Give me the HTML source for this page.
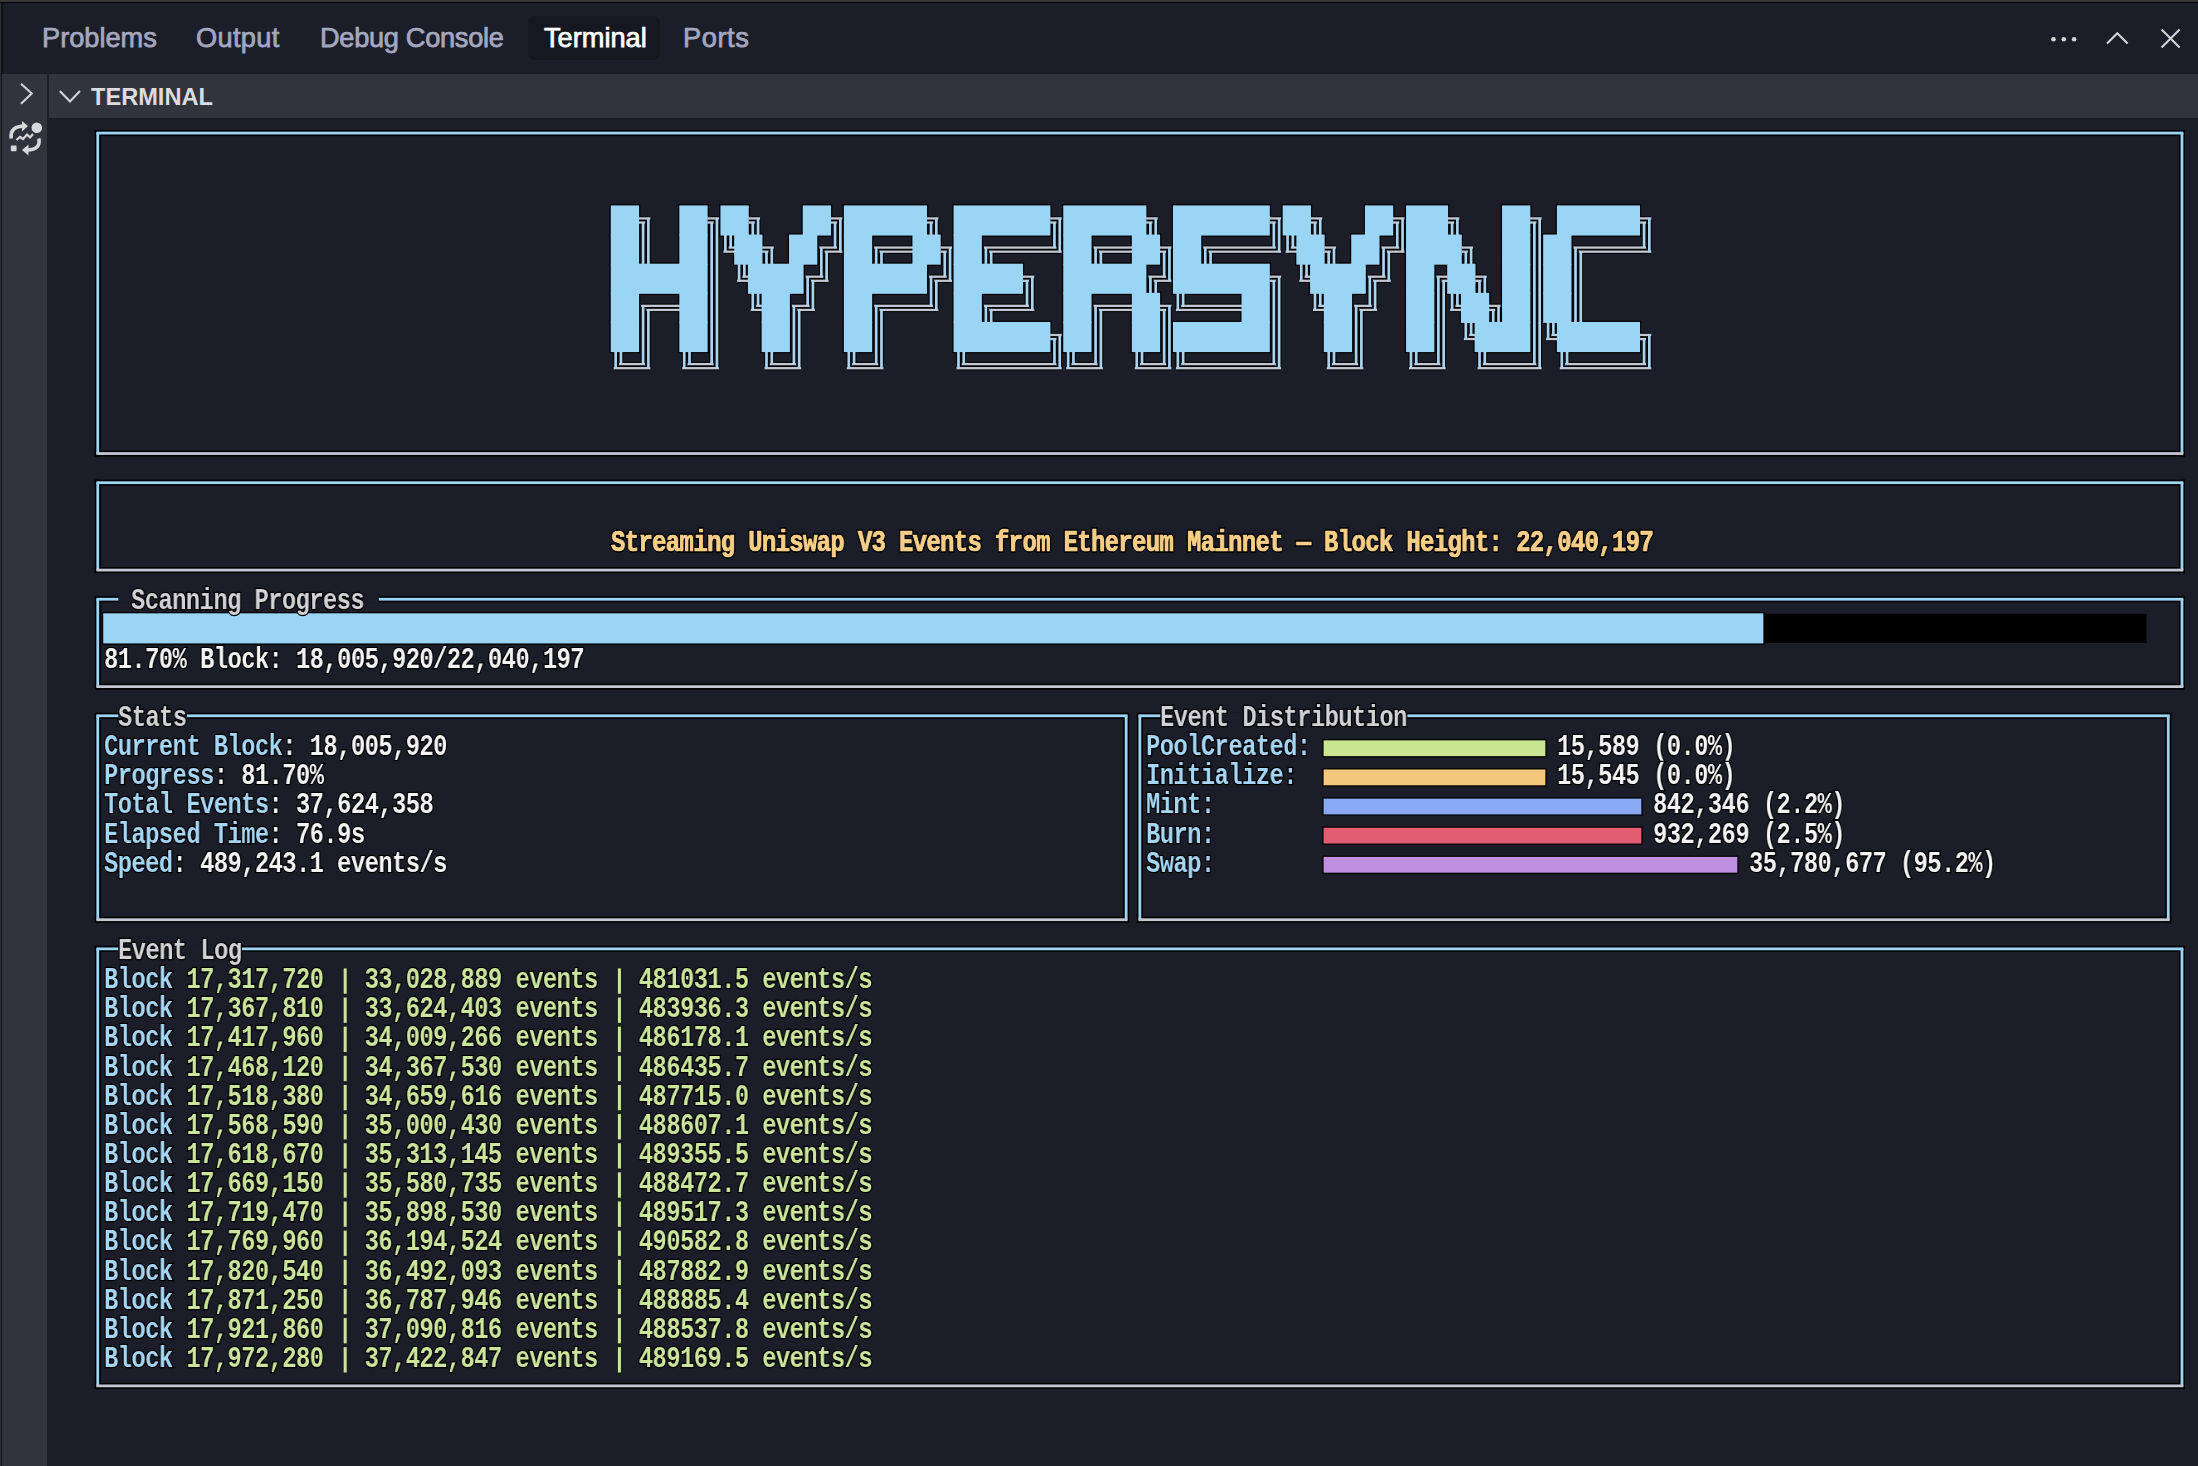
<!DOCTYPE html>
<html><head><meta charset="utf-8"><title>HyperSync Terminal</title>
<style>
html,body{margin:0;padding:0;width:2198px;height:1466px;overflow:hidden;background:#1b1d28}
.t{position:absolute;white-space:pre;font-family:"Liberation Mono",monospace;font-size:28.800px;line-height:29.135px;font-weight:bold;transform-origin:0 0;transform:scaleX(0.83000);letter-spacing:-0.7595px;-webkit-text-stroke:2.6px #000;paint-order:stroke fill;will-change:transform}
.ov2{-webkit-text-stroke:0.7px currentColor;paint-order:normal}
.ov{position:absolute;left:0;top:0}
.tab{position:absolute;top:20.5px;font-family:"Liberation Sans",sans-serif;font-size:27.2px;line-height:34px;color:#a3a7bf;-webkit-text-stroke:0.75px #a3a7bf;white-space:pre}
.act{color:#ffffff;-webkit-text-stroke:0.75px #fff}
.hdr{position:absolute;font-family:"Liberation Sans",sans-serif;font-weight:bold;font-size:23.6px;line-height:26px;color:#dcdcdf;white-space:pre}
</style></head><body>

<div style="position:absolute;left:0;top:0;width:1.2px;height:1466px;background:#2f2f2d"></div>
<div style="position:absolute;left:1.2px;top:0;width:1.4px;height:1466px;background:#0f1118"></div>
<div style="position:absolute;left:0;top:0;width:2198px;height:2px;background:#383838"></div><div style="position:absolute;left:0;top:2px;width:2198px;height:1.2px;background:#050507"></div>
<div style="position:absolute;left:528px;top:16px;width:132px;height:44px;border-radius:6px;background:#161821"></div>
<div class="tab" style="left:42px">Problems</div>
<div class="tab" style="left:196px;letter-spacing:0.35px">Output</div>
<div class="tab" style="left:320px;letter-spacing:-0.3px">Debug Console</div>
<div class="tab act" style="left:544px">Terminal</div>
<div class="tab" style="left:683px;letter-spacing:0.6px">Ports</div>
<svg style="position:absolute;left:2040px;top:20px" width="150" height="40" viewBox="0 0 150 40">
  <circle cx="13.5" cy="19.3" r="2.3" fill="#d4d4d8"/><circle cx="23.8" cy="19.3" r="2.3" fill="#d4d4d8"/><circle cx="34.1" cy="19.3" r="2.3" fill="#d4d4d8"/>
  <path d="M67 23.6 L77.3 13.2 L87.6 23.6" fill="none" stroke="#d4d4d8" stroke-width="2.1"/>
  <path d="M121.6 9.6 L139.6 27.4 M139.6 9.6 L121.6 27.4" fill="none" stroke="#d4d4d8" stroke-width="2.1"/>
</svg>
<div style="position:absolute;left:1.7px;top:74.1px;width:45.4px;height:1393px;background:#31333d"></div>
<div style="position:absolute;left:48.9px;top:74.1px;width:2150px;height:44.4px;background:#31333d"></div>
<svg style="position:absolute;left:0;top:70px" width="100" height="100" viewBox="0 0 100 100">
  <path d="M21 13.8 L31.7 23.6 L21 33.7" fill="none" stroke="#d0d1d8" stroke-width="2.1"/>
  <path d="M59.8 21 L70 31.5 L80 21" fill="none" stroke="#d0d1d8" stroke-width="2.2"/>
  <g fill="none" stroke="#d8d8dc" stroke-width="3.6">
    <path d="M11.2 68.5 C10 60 15 56 24.5 56"/>
    <path d="M38.8 68.5 C40.5 76 36 80 27.5 80"/>
  </g>
  <path d="M22 51 L28 56 L22 61.5 Z" fill="#d8d8dc"/>
  <path d="M28.5 74.5 L22 80 L28.5 85.5 Z" fill="#d8d8dc"/>
  <circle cx="36.8" cy="57.8" r="5.3" fill="#d8d8dc"/>
  <rect x="10.8" y="75.6" width="5.8" height="5.6" rx="1" fill="#d8d8dc"/>
  <path d="M16.5 70 L20 67 L23 69 L27 64.5 L30 67.5 L33 64" fill="none" stroke="#d8d8dc" stroke-width="2.2"/>
</svg>
<div class="hdr" style="left:91px;top:84.2px">TERMINAL</div>

<svg class="ov" width="2198" height="1466" viewBox="0 0 2198 1466"><g><rect x="94.76" y="130.07" width="2090.22" height="6.00" fill="#000"/><rect x="94.76" y="450.55" width="2090.22" height="6.00" fill="#000"/><rect x="94.76" y="130.07" width="6.00" height="326.49" fill="#000"/><rect x="2178.98" y="130.07" width="6.00" height="326.49" fill="#000"/><rect x="96.36" y="131.67" width="2087.02" height="2.80" fill="#9bd5f6"/><rect x="96.36" y="133.07" width="2.80" height="320.49" fill="#9bd5f6"/><rect x="2180.58" y="133.07" width="2.80" height="320.49" fill="#9bd5f6"/><rect x="96.36" y="452.15" width="2087.02" height="2.80" fill="#c3c7d3"/></g><g><rect x="94.76" y="479.69" width="2090.22" height="6.00" fill="#000"/><rect x="94.76" y="567.09" width="2090.22" height="6.00" fill="#000"/><rect x="94.76" y="479.69" width="6.00" height="93.41" fill="#000"/><rect x="2178.98" y="479.69" width="6.00" height="93.41" fill="#000"/><rect x="96.36" y="481.29" width="2087.02" height="2.80" fill="#9bd5f6"/><rect x="96.36" y="482.69" width="2.80" height="87.41" fill="#9bd5f6"/><rect x="2180.58" y="482.69" width="2.80" height="87.41" fill="#9bd5f6"/><rect x="96.36" y="568.69" width="2087.02" height="2.80" fill="#c3c7d3"/></g><g><rect x="94.76" y="596.23" width="2090.22" height="6.00" fill="#000"/><rect x="94.76" y="683.63" width="2090.22" height="6.00" fill="#000"/><rect x="94.76" y="596.23" width="6.00" height="93.40" fill="#000"/><rect x="2178.98" y="596.23" width="6.00" height="93.40" fill="#000"/><rect x="118.32" y="595.73" width="260.53" height="7.00" fill="#1b1d28"/><rect x="96.36" y="597.83" width="21.97" height="2.80" fill="#9bd5f6"/><rect x="378.85" y="597.83" width="1804.53" height="2.80" fill="#9bd5f6"/><rect x="96.36" y="599.23" width="2.80" height="87.40" fill="#9bd5f6"/><rect x="2180.58" y="599.23" width="2.80" height="87.40" fill="#9bd5f6"/><rect x="96.36" y="685.23" width="2087.02" height="2.80" fill="#c3c7d3"/></g><g><rect x="94.76" y="712.77" width="1034.40" height="6.00" fill="#000"/><rect x="94.76" y="916.71" width="1034.40" height="6.00" fill="#000"/><rect x="94.76" y="712.77" width="6.00" height="209.95" fill="#000"/><rect x="1123.16" y="712.77" width="6.00" height="209.95" fill="#000"/><rect x="118.32" y="712.27" width="68.56" height="7.00" fill="#1b1d28"/><rect x="96.36" y="714.37" width="21.97" height="2.80" fill="#9bd5f6"/><rect x="186.88" y="714.37" width="940.67" height="2.80" fill="#9bd5f6"/><rect x="96.36" y="715.77" width="2.80" height="203.95" fill="#9bd5f6"/><rect x="1124.76" y="715.77" width="2.80" height="203.95" fill="#9bd5f6"/><rect x="96.36" y="918.31" width="1031.20" height="2.80" fill="#c3c7d3"/></g><g><rect x="1136.87" y="712.77" width="1034.40" height="6.00" fill="#000"/><rect x="1136.87" y="916.71" width="1034.40" height="6.00" fill="#000"/><rect x="1136.87" y="712.77" width="6.00" height="209.95" fill="#000"/><rect x="2165.27" y="712.77" width="6.00" height="209.95" fill="#000"/><rect x="1160.44" y="712.27" width="246.82" height="7.00" fill="#1b1d28"/><rect x="1138.47" y="714.37" width="21.97" height="2.80" fill="#9bd5f6"/><rect x="1407.25" y="714.37" width="762.42" height="2.80" fill="#9bd5f6"/><rect x="1138.47" y="715.77" width="2.80" height="203.95" fill="#9bd5f6"/><rect x="2166.87" y="715.77" width="2.80" height="203.95" fill="#9bd5f6"/><rect x="1138.47" y="918.31" width="1031.20" height="2.80" fill="#c3c7d3"/></g><g><rect x="94.76" y="945.85" width="2090.22" height="6.00" fill="#000"/><rect x="94.76" y="1382.87" width="2090.22" height="6.00" fill="#000"/><rect x="94.76" y="945.85" width="6.00" height="443.03" fill="#000"/><rect x="2178.98" y="945.85" width="6.00" height="443.03" fill="#000"/><rect x="118.32" y="945.35" width="123.41" height="7.00" fill="#1b1d28"/><rect x="96.36" y="947.45" width="21.97" height="2.80" fill="#9bd5f6"/><rect x="241.73" y="947.45" width="1941.65" height="2.80" fill="#9bd5f6"/><rect x="96.36" y="948.85" width="2.80" height="437.03" fill="#9bd5f6"/><rect x="2180.58" y="948.85" width="2.80" height="437.03" fill="#9bd5f6"/><rect x="96.36" y="1384.47" width="2087.02" height="2.80" fill="#c3c7d3"/></g><rect x="103.41" y="613.80" width="2043.09" height="29.14" fill="#000000"/><rect x="101.91" y="612.00" width="1662.75" height="32.73" fill="#000"/><rect x="103.21" y="613.30" width="1660.15" height="30.14" fill="#9bd5f6"/><rect x="1322.38" y="739.13" width="224.19" height="18.20" fill="#000"/><rect x="1323.58" y="740.34" width="221.79" height="15.80" fill="#c9e590"/><rect x="1322.38" y="768.27" width="224.19" height="18.20" fill="#000"/><rect x="1323.58" y="769.47" width="221.79" height="15.80" fill="#f4c87a"/><rect x="1322.38" y="797.40" width="320.18" height="18.20" fill="#000"/><rect x="1323.58" y="798.61" width="317.78" height="15.80" fill="#8aa9f5"/><rect x="1322.38" y="826.54" width="320.18" height="18.20" fill="#000"/><rect x="1323.58" y="827.74" width="317.78" height="15.80" fill="#e35d72"/><rect x="1322.38" y="855.67" width="416.16" height="18.20" fill="#000"/><rect x="1323.58" y="856.88" width="413.76" height="15.80" fill="#c08fe0"/><rect x="639.38" y="216.27" width="10.36" height="4.30" fill="#000"/><rect x="707.94" y="216.27" width="10.36" height="4.30" fill="#000"/><rect x="749.08" y="216.27" width="10.36" height="4.30" fill="#000"/><rect x="831.35" y="216.27" width="10.36" height="4.30" fill="#000"/><rect x="927.33" y="216.27" width="10.36" height="4.30" fill="#000"/><rect x="1050.74" y="216.27" width="10.36" height="4.30" fill="#000"/><rect x="1146.72" y="216.27" width="10.36" height="4.30" fill="#000"/><rect x="1270.13" y="216.27" width="10.36" height="4.30" fill="#000"/><rect x="1311.27" y="216.27" width="10.36" height="4.30" fill="#000"/><rect x="1393.54" y="216.27" width="10.36" height="4.30" fill="#000"/><rect x="1448.39" y="216.27" width="10.36" height="4.30" fill="#000"/><rect x="1530.66" y="216.27" width="10.36" height="4.30" fill="#000"/><rect x="1640.36" y="216.27" width="10.36" height="4.30" fill="#000"/><rect x="639.38" y="220.37" width="5.06" height="4.30" fill="#000"/><rect x="707.94" y="220.37" width="5.06" height="4.30" fill="#000"/><rect x="749.08" y="220.37" width="5.06" height="4.30" fill="#000"/><rect x="831.35" y="220.37" width="5.06" height="4.30" fill="#000"/><rect x="927.33" y="220.37" width="5.06" height="4.30" fill="#000"/><rect x="1050.74" y="220.37" width="5.06" height="4.30" fill="#000"/><rect x="1146.72" y="220.37" width="5.06" height="4.30" fill="#000"/><rect x="1270.13" y="220.37" width="5.06" height="4.30" fill="#000"/><rect x="1311.27" y="220.37" width="5.06" height="4.30" fill="#000"/><rect x="1393.54" y="220.37" width="5.06" height="4.30" fill="#000"/><rect x="1448.39" y="220.37" width="5.06" height="4.30" fill="#000"/><rect x="1530.66" y="220.37" width="5.06" height="4.30" fill="#000"/><rect x="1640.36" y="220.37" width="5.06" height="4.30" fill="#000"/><rect x="729.31" y="245.41" width="6.06" height="4.30" fill="#000"/><rect x="762.79" y="245.41" width="10.36" height="4.30" fill="#000"/><rect x="819.99" y="245.41" width="16.41" height="4.30" fill="#000"/><rect x="874.84" y="245.41" width="38.78" height="4.30" fill="#000"/><rect x="941.04" y="245.41" width="10.36" height="4.30" fill="#000"/><rect x="984.54" y="245.41" width="71.26" height="4.30" fill="#000"/><rect x="1094.23" y="245.41" width="38.78" height="4.30" fill="#000"/><rect x="1160.44" y="245.41" width="10.36" height="4.30" fill="#000"/><rect x="1203.93" y="245.41" width="71.26" height="4.30" fill="#000"/><rect x="1291.50" y="245.41" width="6.06" height="4.30" fill="#000"/><rect x="1324.98" y="245.41" width="10.36" height="4.30" fill="#000"/><rect x="1382.18" y="245.41" width="16.41" height="4.30" fill="#000"/><rect x="1462.10" y="245.41" width="10.36" height="4.30" fill="#000"/><rect x="1574.15" y="245.41" width="71.26" height="4.30" fill="#000"/><rect x="724.01" y="249.51" width="11.36" height="4.30" fill="#000"/><rect x="762.79" y="249.51" width="5.06" height="4.30" fill="#000"/><rect x="825.29" y="249.51" width="16.41" height="4.30" fill="#000"/><rect x="880.14" y="249.51" width="33.48" height="4.30" fill="#000"/><rect x="941.04" y="249.51" width="5.06" height="4.30" fill="#000"/><rect x="989.84" y="249.51" width="71.26" height="4.30" fill="#000"/><rect x="1099.53" y="249.51" width="33.48" height="4.30" fill="#000"/><rect x="1160.44" y="249.51" width="5.06" height="4.30" fill="#000"/><rect x="1209.23" y="249.51" width="71.26" height="4.30" fill="#000"/><rect x="1286.20" y="249.51" width="11.36" height="4.30" fill="#000"/><rect x="1324.98" y="249.51" width="5.06" height="4.30" fill="#000"/><rect x="1387.48" y="249.51" width="16.41" height="4.30" fill="#000"/><rect x="1462.10" y="249.51" width="5.06" height="4.30" fill="#000"/><rect x="1579.45" y="249.51" width="71.26" height="4.30" fill="#000"/><rect x="743.02" y="274.54" width="6.06" height="4.30" fill="#000"/><rect x="806.28" y="274.54" width="16.41" height="4.30" fill="#000"/><rect x="929.69" y="274.54" width="16.41" height="4.30" fill="#000"/><rect x="1023.32" y="274.54" width="10.36" height="4.30" fill="#000"/><rect x="1149.08" y="274.54" width="16.41" height="4.30" fill="#000"/><rect x="1270.13" y="274.54" width="10.36" height="4.30" fill="#000"/><rect x="1305.21" y="274.54" width="6.06" height="4.30" fill="#000"/><rect x="1368.47" y="274.54" width="16.41" height="4.30" fill="#000"/><rect x="1437.03" y="274.54" width="11.36" height="4.30" fill="#000"/><rect x="1475.81" y="274.54" width="10.36" height="4.30" fill="#000"/><rect x="737.72" y="278.64" width="11.36" height="4.30" fill="#000"/><rect x="811.58" y="278.64" width="16.41" height="4.30" fill="#000"/><rect x="934.99" y="278.64" width="16.41" height="4.30" fill="#000"/><rect x="1023.32" y="278.64" width="5.06" height="4.30" fill="#000"/><rect x="1154.38" y="278.64" width="16.41" height="4.30" fill="#000"/><rect x="1270.13" y="278.64" width="5.06" height="4.30" fill="#000"/><rect x="1299.91" y="278.64" width="11.36" height="4.30" fill="#000"/><rect x="1373.77" y="278.64" width="16.41" height="4.30" fill="#000"/><rect x="1442.33" y="278.64" width="6.06" height="4.30" fill="#000"/><rect x="1475.81" y="278.64" width="5.06" height="4.30" fill="#000"/><rect x="641.74" y="303.68" width="38.78" height="4.30" fill="#000"/><rect x="756.73" y="303.68" width="6.06" height="4.30" fill="#000"/><rect x="792.57" y="303.68" width="16.41" height="4.30" fill="#000"/><rect x="874.84" y="303.68" width="57.55" height="4.30" fill="#000"/><rect x="984.54" y="303.68" width="43.84" height="4.30" fill="#000"/><rect x="1094.23" y="303.68" width="38.78" height="4.30" fill="#000"/><rect x="1160.44" y="303.68" width="10.36" height="4.30" fill="#000"/><rect x="1181.80" y="303.68" width="60.90" height="4.30" fill="#000"/><rect x="1318.92" y="303.68" width="6.06" height="4.30" fill="#000"/><rect x="1354.76" y="303.68" width="16.41" height="4.30" fill="#000"/><rect x="1456.04" y="303.68" width="6.06" height="4.30" fill="#000"/><rect x="1489.52" y="303.68" width="10.36" height="4.30" fill="#000"/><rect x="647.04" y="307.78" width="33.48" height="4.30" fill="#000"/><rect x="751.43" y="307.78" width="11.36" height="4.30" fill="#000"/><rect x="797.87" y="307.78" width="16.41" height="4.30" fill="#000"/><rect x="880.14" y="307.78" width="57.55" height="4.30" fill="#000"/><rect x="989.84" y="307.78" width="43.84" height="4.30" fill="#000"/><rect x="1099.53" y="307.78" width="33.48" height="4.30" fill="#000"/><rect x="1160.44" y="307.78" width="5.06" height="4.30" fill="#000"/><rect x="1176.50" y="307.78" width="66.20" height="4.30" fill="#000"/><rect x="1313.62" y="307.78" width="11.36" height="4.30" fill="#000"/><rect x="1360.06" y="307.78" width="16.41" height="4.30" fill="#000"/><rect x="1450.74" y="307.78" width="11.36" height="4.30" fill="#000"/><rect x="1489.52" y="307.78" width="5.06" height="4.30" fill="#000"/><rect x="1050.74" y="332.81" width="10.36" height="4.30" fill="#000"/><rect x="1469.76" y="332.81" width="6.06" height="4.30" fill="#000"/><rect x="1552.03" y="332.81" width="6.06" height="4.30" fill="#000"/><rect x="1640.36" y="332.81" width="10.36" height="4.30" fill="#000"/><rect x="1050.74" y="336.91" width="5.06" height="4.30" fill="#000"/><rect x="1464.46" y="336.91" width="11.36" height="4.30" fill="#000"/><rect x="1546.73" y="336.91" width="11.36" height="4.30" fill="#000"/><rect x="1640.36" y="336.91" width="5.06" height="4.30" fill="#000"/><rect x="619.61" y="361.95" width="24.82" height="4.30" fill="#000"/><rect x="688.17" y="361.95" width="24.82" height="4.30" fill="#000"/><rect x="770.44" y="361.95" width="24.82" height="4.30" fill="#000"/><rect x="852.72" y="361.95" width="24.82" height="4.30" fill="#000"/><rect x="962.41" y="361.95" width="93.38" height="4.30" fill="#000"/><rect x="1072.11" y="361.95" width="24.82" height="4.30" fill="#000"/><rect x="1140.67" y="361.95" width="24.82" height="4.30" fill="#000"/><rect x="1181.80" y="361.95" width="93.38" height="4.30" fill="#000"/><rect x="1332.64" y="361.95" width="24.82" height="4.30" fill="#000"/><rect x="1414.91" y="361.95" width="24.82" height="4.30" fill="#000"/><rect x="1483.47" y="361.95" width="52.25" height="4.30" fill="#000"/><rect x="1565.74" y="361.95" width="79.67" height="4.30" fill="#000"/><rect x="614.31" y="366.05" width="35.42" height="4.30" fill="#000"/><rect x="682.87" y="366.05" width="35.42" height="4.30" fill="#000"/><rect x="765.14" y="366.05" width="35.42" height="4.30" fill="#000"/><rect x="847.42" y="366.05" width="35.42" height="4.30" fill="#000"/><rect x="957.11" y="366.05" width="103.98" height="4.30" fill="#000"/><rect x="1066.81" y="366.05" width="35.42" height="4.30" fill="#000"/><rect x="1135.37" y="366.05" width="35.42" height="4.30" fill="#000"/><rect x="1176.50" y="366.05" width="103.98" height="4.30" fill="#000"/><rect x="1327.34" y="366.05" width="35.42" height="4.30" fill="#000"/><rect x="1409.61" y="366.05" width="35.42" height="4.30" fill="#000"/><rect x="1478.17" y="366.05" width="62.85" height="4.30" fill="#000"/><rect x="1560.44" y="366.05" width="90.27" height="4.30" fill="#000"/><rect x="613.31" y="351.58" width="4.70" height="16.62" fill="#000"/><rect x="618.61" y="351.58" width="4.70" height="12.52" fill="#000"/><rect x="640.74" y="222.52" width="4.70" height="41.65" fill="#000"/><rect x="640.74" y="305.83" width="4.70" height="58.27" fill="#000"/><rect x="646.04" y="218.42" width="4.70" height="45.75" fill="#000"/><rect x="646.04" y="309.93" width="4.70" height="58.27" fill="#000"/><rect x="681.87" y="351.58" width="4.70" height="16.62" fill="#000"/><rect x="687.17" y="351.58" width="4.70" height="12.52" fill="#000"/><rect x="709.30" y="222.52" width="4.70" height="141.57" fill="#000"/><rect x="714.60" y="218.42" width="4.70" height="149.78" fill="#000"/><rect x="723.01" y="235.04" width="4.70" height="16.62" fill="#000"/><rect x="728.31" y="235.04" width="4.70" height="12.52" fill="#000"/><rect x="736.72" y="264.18" width="4.70" height="16.62" fill="#000"/><rect x="742.02" y="264.18" width="4.70" height="12.52" fill="#000"/><rect x="750.43" y="222.52" width="4.70" height="12.52" fill="#000"/><rect x="750.43" y="293.31" width="4.70" height="16.62" fill="#000"/><rect x="755.73" y="218.42" width="4.70" height="16.62" fill="#000"/><rect x="755.73" y="293.31" width="4.70" height="12.52" fill="#000"/><rect x="764.14" y="251.66" width="4.70" height="12.52" fill="#000"/><rect x="764.14" y="351.58" width="4.70" height="16.62" fill="#000"/><rect x="769.44" y="247.56" width="4.70" height="16.62" fill="#000"/><rect x="769.44" y="351.58" width="4.70" height="12.52" fill="#000"/><rect x="791.57" y="305.83" width="4.70" height="58.27" fill="#000"/><rect x="796.87" y="309.93" width="4.70" height="58.27" fill="#000"/><rect x="805.28" y="276.69" width="4.70" height="29.14" fill="#000"/><rect x="810.58" y="280.79" width="4.70" height="29.14" fill="#000"/><rect x="818.99" y="247.56" width="4.70" height="29.13" fill="#000"/><rect x="824.29" y="251.66" width="4.70" height="29.13" fill="#000"/><rect x="832.70" y="222.52" width="4.70" height="25.03" fill="#000"/><rect x="838.00" y="218.42" width="4.70" height="33.24" fill="#000"/><rect x="846.42" y="351.58" width="4.70" height="16.62" fill="#000"/><rect x="851.72" y="351.58" width="4.70" height="12.52" fill="#000"/><rect x="873.84" y="247.56" width="4.70" height="16.62" fill="#000"/><rect x="873.84" y="305.83" width="4.70" height="58.27" fill="#000"/><rect x="879.14" y="251.66" width="4.70" height="12.52" fill="#000"/><rect x="879.14" y="309.93" width="4.70" height="58.27" fill="#000"/><rect x="928.69" y="222.52" width="4.70" height="12.52" fill="#000"/><rect x="928.69" y="276.69" width="4.70" height="29.14" fill="#000"/><rect x="933.99" y="218.42" width="4.70" height="16.62" fill="#000"/><rect x="933.99" y="280.79" width="4.70" height="29.14" fill="#000"/><rect x="942.40" y="251.66" width="4.70" height="25.03" fill="#000"/><rect x="947.70" y="247.56" width="4.70" height="33.24" fill="#000"/><rect x="956.11" y="351.58" width="4.70" height="16.62" fill="#000"/><rect x="961.41" y="351.58" width="4.70" height="12.52" fill="#000"/><rect x="983.54" y="247.56" width="4.70" height="16.62" fill="#000"/><rect x="983.54" y="305.83" width="4.70" height="16.62" fill="#000"/><rect x="988.84" y="251.66" width="4.70" height="12.52" fill="#000"/><rect x="988.84" y="309.93" width="4.70" height="12.52" fill="#000"/><rect x="1024.67" y="280.79" width="4.70" height="25.04" fill="#000"/><rect x="1029.97" y="276.69" width="4.70" height="33.24" fill="#000"/><rect x="1052.10" y="222.52" width="4.70" height="25.03" fill="#000"/><rect x="1052.10" y="339.06" width="4.70" height="25.03" fill="#000"/><rect x="1057.40" y="218.42" width="4.70" height="33.24" fill="#000"/><rect x="1057.40" y="334.96" width="4.70" height="33.24" fill="#000"/><rect x="1065.81" y="351.58" width="4.70" height="16.62" fill="#000"/><rect x="1071.11" y="351.58" width="4.70" height="12.52" fill="#000"/><rect x="1093.23" y="247.56" width="4.70" height="16.62" fill="#000"/><rect x="1093.23" y="305.83" width="4.70" height="58.27" fill="#000"/><rect x="1098.53" y="251.66" width="4.70" height="12.52" fill="#000"/><rect x="1098.53" y="309.93" width="4.70" height="58.27" fill="#000"/><rect x="1134.37" y="351.58" width="4.70" height="16.62" fill="#000"/><rect x="1139.67" y="351.58" width="4.70" height="12.52" fill="#000"/><rect x="1148.08" y="222.52" width="4.70" height="12.52" fill="#000"/><rect x="1148.08" y="276.69" width="4.70" height="16.62" fill="#000"/><rect x="1153.38" y="218.42" width="4.70" height="16.62" fill="#000"/><rect x="1153.38" y="280.79" width="4.70" height="12.52" fill="#000"/><rect x="1161.79" y="251.66" width="4.70" height="25.03" fill="#000"/><rect x="1161.79" y="309.93" width="4.70" height="54.17" fill="#000"/><rect x="1167.09" y="247.56" width="4.70" height="33.24" fill="#000"/><rect x="1167.09" y="305.83" width="4.70" height="62.37" fill="#000"/><rect x="1175.50" y="293.31" width="4.70" height="16.62" fill="#000"/><rect x="1175.50" y="351.58" width="4.70" height="16.62" fill="#000"/><rect x="1180.80" y="293.31" width="4.70" height="12.52" fill="#000"/><rect x="1180.80" y="351.58" width="4.70" height="12.52" fill="#000"/><rect x="1202.93" y="247.56" width="4.70" height="16.62" fill="#000"/><rect x="1208.23" y="251.66" width="4.70" height="12.52" fill="#000"/><rect x="1271.49" y="222.52" width="4.70" height="25.03" fill="#000"/><rect x="1271.49" y="280.79" width="4.70" height="83.31" fill="#000"/><rect x="1276.79" y="218.42" width="4.70" height="33.24" fill="#000"/><rect x="1276.79" y="276.69" width="4.70" height="91.51" fill="#000"/><rect x="1285.20" y="235.04" width="4.70" height="16.62" fill="#000"/><rect x="1290.50" y="235.04" width="4.70" height="12.52" fill="#000"/><rect x="1298.91" y="264.18" width="4.70" height="16.62" fill="#000"/><rect x="1304.21" y="264.18" width="4.70" height="12.52" fill="#000"/><rect x="1312.62" y="222.52" width="4.70" height="12.52" fill="#000"/><rect x="1312.62" y="293.31" width="4.70" height="16.62" fill="#000"/><rect x="1317.92" y="218.42" width="4.70" height="16.62" fill="#000"/><rect x="1317.92" y="293.31" width="4.70" height="12.52" fill="#000"/><rect x="1326.34" y="251.66" width="4.70" height="12.52" fill="#000"/><rect x="1326.34" y="351.58" width="4.70" height="16.62" fill="#000"/><rect x="1331.64" y="247.56" width="4.70" height="16.62" fill="#000"/><rect x="1331.64" y="351.58" width="4.70" height="12.52" fill="#000"/><rect x="1353.76" y="305.83" width="4.70" height="58.27" fill="#000"/><rect x="1359.06" y="309.93" width="4.70" height="58.27" fill="#000"/><rect x="1367.47" y="276.69" width="4.70" height="29.14" fill="#000"/><rect x="1372.77" y="280.79" width="4.70" height="29.14" fill="#000"/><rect x="1381.18" y="247.56" width="4.70" height="29.13" fill="#000"/><rect x="1386.48" y="251.66" width="4.70" height="29.13" fill="#000"/><rect x="1394.90" y="222.52" width="4.70" height="25.03" fill="#000"/><rect x="1400.20" y="218.42" width="4.70" height="33.24" fill="#000"/><rect x="1408.61" y="351.58" width="4.70" height="16.62" fill="#000"/><rect x="1413.91" y="351.58" width="4.70" height="12.52" fill="#000"/><rect x="1436.03" y="276.69" width="4.70" height="87.41" fill="#000"/><rect x="1441.33" y="280.79" width="4.70" height="87.41" fill="#000"/><rect x="1449.74" y="222.52" width="4.70" height="12.52" fill="#000"/><rect x="1449.74" y="293.31" width="4.70" height="16.62" fill="#000"/><rect x="1455.04" y="218.42" width="4.70" height="16.62" fill="#000"/><rect x="1455.04" y="293.31" width="4.70" height="12.52" fill="#000"/><rect x="1463.46" y="251.66" width="4.70" height="12.52" fill="#000"/><rect x="1463.46" y="322.45" width="4.70" height="16.62" fill="#000"/><rect x="1468.76" y="247.56" width="4.70" height="16.62" fill="#000"/><rect x="1468.76" y="322.45" width="4.70" height="12.52" fill="#000"/><rect x="1477.17" y="280.79" width="4.70" height="12.52" fill="#000"/><rect x="1477.17" y="351.58" width="4.70" height="16.62" fill="#000"/><rect x="1482.47" y="276.69" width="4.70" height="16.62" fill="#000"/><rect x="1482.47" y="351.58" width="4.70" height="12.52" fill="#000"/><rect x="1490.88" y="309.93" width="4.70" height="12.52" fill="#000"/><rect x="1496.18" y="305.83" width="4.70" height="16.62" fill="#000"/><rect x="1532.02" y="222.52" width="4.70" height="141.57" fill="#000"/><rect x="1537.32" y="218.42" width="4.70" height="149.78" fill="#000"/><rect x="1545.73" y="322.45" width="4.70" height="16.62" fill="#000"/><rect x="1551.03" y="322.45" width="4.70" height="12.52" fill="#000"/><rect x="1559.44" y="351.58" width="4.70" height="16.62" fill="#000"/><rect x="1564.74" y="351.58" width="4.70" height="12.52" fill="#000"/><rect x="1573.15" y="247.56" width="4.70" height="74.89" fill="#000"/><rect x="1578.45" y="251.66" width="4.70" height="70.79" fill="#000"/><rect x="1641.71" y="222.52" width="4.70" height="25.03" fill="#000"/><rect x="1641.71" y="339.06" width="4.70" height="25.03" fill="#000"/><rect x="1647.01" y="218.42" width="4.70" height="33.24" fill="#000"/><rect x="1647.01" y="334.96" width="4.70" height="33.24" fill="#000"/><rect x="609.56" y="204.21" width="30.72" height="32.54" fill="#000"/><rect x="678.12" y="204.21" width="30.72" height="32.54" fill="#000"/><rect x="719.25" y="204.21" width="30.72" height="32.54" fill="#000"/><rect x="801.52" y="204.21" width="30.72" height="32.54" fill="#000"/><rect x="842.66" y="204.21" width="85.57" height="32.54" fill="#000"/><rect x="952.36" y="204.21" width="99.28" height="32.54" fill="#000"/><rect x="1062.05" y="204.21" width="85.57" height="32.54" fill="#000"/><rect x="1171.75" y="204.21" width="99.28" height="32.54" fill="#000"/><rect x="1281.44" y="204.21" width="30.72" height="32.54" fill="#000"/><rect x="1363.72" y="204.21" width="30.72" height="32.54" fill="#000"/><rect x="1404.85" y="204.21" width="44.44" height="32.54" fill="#000"/><rect x="1500.84" y="204.21" width="30.72" height="32.54" fill="#000"/><rect x="1555.68" y="204.21" width="85.57" height="32.54" fill="#000"/><rect x="609.56" y="233.34" width="30.72" height="32.54" fill="#000"/><rect x="678.12" y="233.34" width="30.72" height="32.54" fill="#000"/><rect x="732.96" y="233.34" width="30.72" height="32.54" fill="#000"/><rect x="787.81" y="233.34" width="30.72" height="32.54" fill="#000"/><rect x="842.66" y="233.34" width="30.72" height="32.54" fill="#000"/><rect x="911.22" y="233.34" width="30.72" height="32.54" fill="#000"/><rect x="952.36" y="233.34" width="30.72" height="32.54" fill="#000"/><rect x="1062.05" y="233.34" width="30.72" height="32.54" fill="#000"/><rect x="1130.61" y="233.34" width="30.72" height="32.54" fill="#000"/><rect x="1171.75" y="233.34" width="30.72" height="32.54" fill="#000"/><rect x="1295.16" y="233.34" width="30.72" height="32.54" fill="#000"/><rect x="1350.00" y="233.34" width="30.72" height="32.54" fill="#000"/><rect x="1404.85" y="233.34" width="58.15" height="32.54" fill="#000"/><rect x="1500.84" y="233.34" width="30.72" height="32.54" fill="#000"/><rect x="1541.97" y="233.34" width="30.72" height="32.54" fill="#000"/><rect x="609.56" y="262.48" width="99.28" height="32.54" fill="#000"/><rect x="746.68" y="262.48" width="58.15" height="32.54" fill="#000"/><rect x="842.66" y="262.48" width="85.57" height="32.54" fill="#000"/><rect x="952.36" y="262.48" width="71.86" height="32.54" fill="#000"/><rect x="1062.05" y="262.48" width="85.57" height="32.54" fill="#000"/><rect x="1171.75" y="262.48" width="99.28" height="32.54" fill="#000"/><rect x="1308.87" y="262.48" width="58.15" height="32.54" fill="#000"/><rect x="1404.85" y="262.48" width="30.72" height="32.54" fill="#000"/><rect x="1445.99" y="262.48" width="30.72" height="32.54" fill="#000"/><rect x="1500.84" y="262.48" width="30.72" height="32.54" fill="#000"/><rect x="1541.97" y="262.48" width="30.72" height="32.54" fill="#000"/><rect x="609.56" y="291.61" width="30.72" height="32.54" fill="#000"/><rect x="678.12" y="291.61" width="30.72" height="32.54" fill="#000"/><rect x="760.39" y="291.61" width="30.72" height="32.54" fill="#000"/><rect x="842.66" y="291.61" width="30.72" height="32.54" fill="#000"/><rect x="952.36" y="291.61" width="30.72" height="32.54" fill="#000"/><rect x="1062.05" y="291.61" width="30.72" height="32.54" fill="#000"/><rect x="1130.61" y="291.61" width="30.72" height="32.54" fill="#000"/><rect x="1240.31" y="291.61" width="30.72" height="32.54" fill="#000"/><rect x="1322.58" y="291.61" width="30.72" height="32.54" fill="#000"/><rect x="1404.85" y="291.61" width="30.72" height="32.54" fill="#000"/><rect x="1459.70" y="291.61" width="30.72" height="32.54" fill="#000"/><rect x="1500.84" y="291.61" width="30.72" height="32.54" fill="#000"/><rect x="1541.97" y="291.61" width="30.72" height="32.54" fill="#000"/><rect x="609.56" y="320.75" width="30.72" height="32.54" fill="#000"/><rect x="678.12" y="320.75" width="30.72" height="32.54" fill="#000"/><rect x="760.39" y="320.75" width="30.72" height="32.54" fill="#000"/><rect x="842.66" y="320.75" width="30.72" height="32.54" fill="#000"/><rect x="952.36" y="320.75" width="99.28" height="32.54" fill="#000"/><rect x="1062.05" y="320.75" width="30.72" height="32.54" fill="#000"/><rect x="1130.61" y="320.75" width="30.72" height="32.54" fill="#000"/><rect x="1171.75" y="320.75" width="99.28" height="32.54" fill="#000"/><rect x="1322.58" y="320.75" width="30.72" height="32.54" fill="#000"/><rect x="1404.85" y="320.75" width="30.72" height="32.54" fill="#000"/><rect x="1473.41" y="320.75" width="58.15" height="32.54" fill="#000"/><rect x="1555.68" y="320.75" width="85.57" height="32.54" fill="#000"/><rect x="638.78" y="217.27" width="11.56" height="2.30" fill="#c3c7d3"/><rect x="707.34" y="217.27" width="11.56" height="2.30" fill="#c3c7d3"/><rect x="748.48" y="217.27" width="11.56" height="2.30" fill="#c3c7d3"/><rect x="830.75" y="217.27" width="11.56" height="2.30" fill="#c3c7d3"/><rect x="926.73" y="217.27" width="11.56" height="2.30" fill="#c3c7d3"/><rect x="1050.14" y="217.27" width="11.56" height="2.30" fill="#c3c7d3"/><rect x="1146.12" y="217.27" width="11.56" height="2.30" fill="#c3c7d3"/><rect x="1269.53" y="217.27" width="11.56" height="2.30" fill="#c3c7d3"/><rect x="1310.67" y="217.27" width="11.56" height="2.30" fill="#c3c7d3"/><rect x="1392.94" y="217.27" width="11.56" height="2.30" fill="#c3c7d3"/><rect x="1447.79" y="217.27" width="11.56" height="2.30" fill="#c3c7d3"/><rect x="1530.06" y="217.27" width="11.56" height="2.30" fill="#c3c7d3"/><rect x="1639.76" y="217.27" width="11.56" height="2.30" fill="#c3c7d3"/><rect x="638.78" y="221.37" width="6.26" height="2.30" fill="#c3c7d3"/><rect x="707.34" y="221.37" width="6.26" height="2.30" fill="#c3c7d3"/><rect x="748.48" y="221.37" width="6.26" height="2.30" fill="#c3c7d3"/><rect x="830.75" y="221.37" width="6.26" height="2.30" fill="#c3c7d3"/><rect x="926.73" y="221.37" width="6.26" height="2.30" fill="#c3c7d3"/><rect x="1050.14" y="221.37" width="6.26" height="2.30" fill="#c3c7d3"/><rect x="1146.12" y="221.37" width="6.26" height="2.30" fill="#c3c7d3"/><rect x="1269.53" y="221.37" width="6.26" height="2.30" fill="#c3c7d3"/><rect x="1310.67" y="221.37" width="6.26" height="2.30" fill="#c3c7d3"/><rect x="1392.94" y="221.37" width="6.26" height="2.30" fill="#c3c7d3"/><rect x="1447.79" y="221.37" width="6.26" height="2.30" fill="#c3c7d3"/><rect x="1530.06" y="221.37" width="6.26" height="2.30" fill="#c3c7d3"/><rect x="1639.76" y="221.37" width="6.26" height="2.30" fill="#c3c7d3"/><rect x="728.71" y="246.41" width="7.26" height="2.30" fill="#c3c7d3"/><rect x="762.19" y="246.41" width="11.56" height="2.30" fill="#c3c7d3"/><rect x="819.39" y="246.41" width="17.61" height="2.30" fill="#c3c7d3"/><rect x="874.24" y="246.41" width="39.98" height="2.30" fill="#c3c7d3"/><rect x="940.44" y="246.41" width="11.56" height="2.30" fill="#c3c7d3"/><rect x="983.94" y="246.41" width="72.46" height="2.30" fill="#c3c7d3"/><rect x="1093.63" y="246.41" width="39.98" height="2.30" fill="#c3c7d3"/><rect x="1159.84" y="246.41" width="11.56" height="2.30" fill="#c3c7d3"/><rect x="1203.33" y="246.41" width="72.46" height="2.30" fill="#c3c7d3"/><rect x="1290.90" y="246.41" width="7.26" height="2.30" fill="#c3c7d3"/><rect x="1324.38" y="246.41" width="11.56" height="2.30" fill="#c3c7d3"/><rect x="1381.58" y="246.41" width="17.61" height="2.30" fill="#c3c7d3"/><rect x="1461.50" y="246.41" width="11.56" height="2.30" fill="#c3c7d3"/><rect x="1573.55" y="246.41" width="72.46" height="2.30" fill="#c3c7d3"/><rect x="723.41" y="250.51" width="12.56" height="2.30" fill="#c3c7d3"/><rect x="762.19" y="250.51" width="6.26" height="2.30" fill="#c3c7d3"/><rect x="824.69" y="250.51" width="17.61" height="2.30" fill="#c3c7d3"/><rect x="879.54" y="250.51" width="34.68" height="2.30" fill="#c3c7d3"/><rect x="940.44" y="250.51" width="6.26" height="2.30" fill="#c3c7d3"/><rect x="989.24" y="250.51" width="72.46" height="2.30" fill="#c3c7d3"/><rect x="1098.93" y="250.51" width="34.68" height="2.30" fill="#c3c7d3"/><rect x="1159.84" y="250.51" width="6.26" height="2.30" fill="#c3c7d3"/><rect x="1208.63" y="250.51" width="72.46" height="2.30" fill="#c3c7d3"/><rect x="1285.60" y="250.51" width="12.56" height="2.30" fill="#c3c7d3"/><rect x="1324.38" y="250.51" width="6.26" height="2.30" fill="#c3c7d3"/><rect x="1386.88" y="250.51" width="17.61" height="2.30" fill="#c3c7d3"/><rect x="1461.50" y="250.51" width="6.26" height="2.30" fill="#c3c7d3"/><rect x="1578.85" y="250.51" width="72.46" height="2.30" fill="#c3c7d3"/><rect x="742.42" y="275.54" width="7.26" height="2.30" fill="#c3c7d3"/><rect x="805.68" y="275.54" width="17.61" height="2.30" fill="#c3c7d3"/><rect x="929.09" y="275.54" width="17.61" height="2.30" fill="#c3c7d3"/><rect x="1022.72" y="275.54" width="11.56" height="2.30" fill="#c3c7d3"/><rect x="1148.48" y="275.54" width="17.61" height="2.30" fill="#c3c7d3"/><rect x="1269.53" y="275.54" width="11.56" height="2.30" fill="#c3c7d3"/><rect x="1304.61" y="275.54" width="7.26" height="2.30" fill="#c3c7d3"/><rect x="1367.87" y="275.54" width="17.61" height="2.30" fill="#c3c7d3"/><rect x="1436.43" y="275.54" width="12.56" height="2.30" fill="#c3c7d3"/><rect x="1475.21" y="275.54" width="11.56" height="2.30" fill="#c3c7d3"/><rect x="737.12" y="279.64" width="12.56" height="2.30" fill="#c3c7d3"/><rect x="810.98" y="279.64" width="17.61" height="2.30" fill="#c3c7d3"/><rect x="934.39" y="279.64" width="17.61" height="2.30" fill="#c3c7d3"/><rect x="1022.72" y="279.64" width="6.26" height="2.30" fill="#c3c7d3"/><rect x="1153.78" y="279.64" width="17.61" height="2.30" fill="#c3c7d3"/><rect x="1269.53" y="279.64" width="6.26" height="2.30" fill="#c3c7d3"/><rect x="1299.31" y="279.64" width="12.56" height="2.30" fill="#c3c7d3"/><rect x="1373.17" y="279.64" width="17.61" height="2.30" fill="#c3c7d3"/><rect x="1441.73" y="279.64" width="7.26" height="2.30" fill="#c3c7d3"/><rect x="1475.21" y="279.64" width="6.26" height="2.30" fill="#c3c7d3"/><rect x="641.14" y="304.68" width="39.98" height="2.30" fill="#c3c7d3"/><rect x="756.13" y="304.68" width="7.26" height="2.30" fill="#c3c7d3"/><rect x="791.97" y="304.68" width="17.61" height="2.30" fill="#c3c7d3"/><rect x="874.24" y="304.68" width="58.75" height="2.30" fill="#c3c7d3"/><rect x="983.94" y="304.68" width="45.04" height="2.30" fill="#c3c7d3"/><rect x="1093.63" y="304.68" width="39.98" height="2.30" fill="#c3c7d3"/><rect x="1159.84" y="304.68" width="11.56" height="2.30" fill="#c3c7d3"/><rect x="1181.20" y="304.68" width="62.10" height="2.30" fill="#c3c7d3"/><rect x="1318.32" y="304.68" width="7.26" height="2.30" fill="#c3c7d3"/><rect x="1354.16" y="304.68" width="17.61" height="2.30" fill="#c3c7d3"/><rect x="1455.44" y="304.68" width="7.26" height="2.30" fill="#c3c7d3"/><rect x="1488.92" y="304.68" width="11.56" height="2.30" fill="#c3c7d3"/><rect x="646.44" y="308.78" width="34.68" height="2.30" fill="#c3c7d3"/><rect x="750.83" y="308.78" width="12.56" height="2.30" fill="#c3c7d3"/><rect x="797.27" y="308.78" width="17.61" height="2.30" fill="#c3c7d3"/><rect x="879.54" y="308.78" width="58.75" height="2.30" fill="#c3c7d3"/><rect x="989.24" y="308.78" width="45.04" height="2.30" fill="#c3c7d3"/><rect x="1098.93" y="308.78" width="34.68" height="2.30" fill="#c3c7d3"/><rect x="1159.84" y="308.78" width="6.26" height="2.30" fill="#c3c7d3"/><rect x="1175.90" y="308.78" width="67.40" height="2.30" fill="#c3c7d3"/><rect x="1313.02" y="308.78" width="12.56" height="2.30" fill="#c3c7d3"/><rect x="1359.46" y="308.78" width="17.61" height="2.30" fill="#c3c7d3"/><rect x="1450.14" y="308.78" width="12.56" height="2.30" fill="#c3c7d3"/><rect x="1488.92" y="308.78" width="6.26" height="2.30" fill="#c3c7d3"/><rect x="1050.14" y="333.81" width="11.56" height="2.30" fill="#c3c7d3"/><rect x="1469.16" y="333.81" width="7.26" height="2.30" fill="#c3c7d3"/><rect x="1551.43" y="333.81" width="7.26" height="2.30" fill="#c3c7d3"/><rect x="1639.76" y="333.81" width="11.56" height="2.30" fill="#c3c7d3"/><rect x="1050.14" y="337.91" width="6.26" height="2.30" fill="#c3c7d3"/><rect x="1463.86" y="337.91" width="12.56" height="2.30" fill="#c3c7d3"/><rect x="1546.13" y="337.91" width="12.56" height="2.30" fill="#c3c7d3"/><rect x="1639.76" y="337.91" width="6.26" height="2.30" fill="#c3c7d3"/><rect x="619.01" y="362.95" width="26.02" height="2.30" fill="#c3c7d3"/><rect x="687.57" y="362.95" width="26.02" height="2.30" fill="#c3c7d3"/><rect x="769.84" y="362.95" width="26.02" height="2.30" fill="#c3c7d3"/><rect x="852.12" y="362.95" width="26.02" height="2.30" fill="#c3c7d3"/><rect x="961.81" y="362.95" width="94.58" height="2.30" fill="#c3c7d3"/><rect x="1071.51" y="362.95" width="26.02" height="2.30" fill="#c3c7d3"/><rect x="1140.07" y="362.95" width="26.02" height="2.30" fill="#c3c7d3"/><rect x="1181.20" y="362.95" width="94.58" height="2.30" fill="#c3c7d3"/><rect x="1332.04" y="362.95" width="26.02" height="2.30" fill="#c3c7d3"/><rect x="1414.31" y="362.95" width="26.02" height="2.30" fill="#c3c7d3"/><rect x="1482.87" y="362.95" width="53.45" height="2.30" fill="#c3c7d3"/><rect x="1565.14" y="362.95" width="80.87" height="2.30" fill="#c3c7d3"/><rect x="613.71" y="367.05" width="36.62" height="2.30" fill="#c3c7d3"/><rect x="682.27" y="367.05" width="36.62" height="2.30" fill="#c3c7d3"/><rect x="764.54" y="367.05" width="36.62" height="2.30" fill="#c3c7d3"/><rect x="846.82" y="367.05" width="36.62" height="2.30" fill="#c3c7d3"/><rect x="956.51" y="367.05" width="105.18" height="2.30" fill="#c3c7d3"/><rect x="1066.21" y="367.05" width="36.62" height="2.30" fill="#c3c7d3"/><rect x="1134.77" y="367.05" width="36.62" height="2.30" fill="#c3c7d3"/><rect x="1175.90" y="367.05" width="105.18" height="2.30" fill="#c3c7d3"/><rect x="1326.74" y="367.05" width="36.62" height="2.30" fill="#c3c7d3"/><rect x="1409.01" y="367.05" width="36.62" height="2.30" fill="#c3c7d3"/><rect x="1477.57" y="367.05" width="64.05" height="2.30" fill="#c3c7d3"/><rect x="1559.84" y="367.05" width="91.47" height="2.30" fill="#c3c7d3"/><rect x="614.31" y="350.98" width="2.70" height="17.82" fill="#a9d3ee"/><rect x="619.61" y="350.98" width="2.70" height="13.72" fill="#a9d3ee"/><rect x="641.74" y="221.92" width="2.70" height="42.85" fill="#a9d3ee"/><rect x="641.74" y="305.23" width="2.70" height="59.47" fill="#a9d3ee"/><rect x="647.04" y="217.82" width="2.70" height="46.95" fill="#a9d3ee"/><rect x="647.04" y="309.33" width="2.70" height="59.47" fill="#a9d3ee"/><rect x="682.87" y="350.98" width="2.70" height="17.82" fill="#a9d3ee"/><rect x="688.17" y="350.98" width="2.70" height="13.72" fill="#a9d3ee"/><rect x="710.30" y="221.92" width="2.70" height="142.77" fill="#a9d3ee"/><rect x="715.60" y="217.82" width="2.70" height="150.98" fill="#a9d3ee"/><rect x="724.01" y="234.44" width="2.70" height="17.82" fill="#a9d3ee"/><rect x="729.31" y="234.44" width="2.70" height="13.72" fill="#a9d3ee"/><rect x="737.72" y="263.57" width="2.70" height="17.82" fill="#a9d3ee"/><rect x="743.02" y="263.57" width="2.70" height="13.72" fill="#a9d3ee"/><rect x="751.43" y="221.92" width="2.70" height="13.72" fill="#a9d3ee"/><rect x="751.43" y="292.71" width="2.70" height="17.82" fill="#a9d3ee"/><rect x="756.73" y="217.82" width="2.70" height="17.82" fill="#a9d3ee"/><rect x="756.73" y="292.71" width="2.70" height="13.72" fill="#a9d3ee"/><rect x="765.14" y="251.06" width="2.70" height="13.72" fill="#a9d3ee"/><rect x="765.14" y="350.98" width="2.70" height="17.82" fill="#a9d3ee"/><rect x="770.44" y="246.96" width="2.70" height="17.82" fill="#a9d3ee"/><rect x="770.44" y="350.98" width="2.70" height="13.72" fill="#a9d3ee"/><rect x="792.57" y="305.23" width="2.70" height="59.47" fill="#a9d3ee"/><rect x="797.87" y="309.33" width="2.70" height="59.47" fill="#a9d3ee"/><rect x="806.28" y="276.09" width="2.70" height="30.34" fill="#a9d3ee"/><rect x="811.58" y="280.19" width="2.70" height="30.34" fill="#a9d3ee"/><rect x="819.99" y="246.96" width="2.70" height="30.33" fill="#a9d3ee"/><rect x="825.29" y="251.06" width="2.70" height="30.33" fill="#a9d3ee"/><rect x="833.70" y="221.92" width="2.70" height="26.23" fill="#a9d3ee"/><rect x="839.00" y="217.82" width="2.70" height="34.44" fill="#a9d3ee"/><rect x="847.42" y="350.98" width="2.70" height="17.82" fill="#a9d3ee"/><rect x="852.72" y="350.98" width="2.70" height="13.72" fill="#a9d3ee"/><rect x="874.84" y="246.96" width="2.70" height="17.82" fill="#a9d3ee"/><rect x="874.84" y="305.23" width="2.70" height="59.47" fill="#a9d3ee"/><rect x="880.14" y="251.06" width="2.70" height="13.72" fill="#a9d3ee"/><rect x="880.14" y="309.33" width="2.70" height="59.47" fill="#a9d3ee"/><rect x="929.69" y="221.92" width="2.70" height="13.72" fill="#a9d3ee"/><rect x="929.69" y="276.09" width="2.70" height="30.34" fill="#a9d3ee"/><rect x="934.99" y="217.82" width="2.70" height="17.82" fill="#a9d3ee"/><rect x="934.99" y="280.19" width="2.70" height="30.34" fill="#a9d3ee"/><rect x="943.40" y="251.06" width="2.70" height="26.23" fill="#a9d3ee"/><rect x="948.70" y="246.96" width="2.70" height="34.44" fill="#a9d3ee"/><rect x="957.11" y="350.98" width="2.70" height="17.82" fill="#a9d3ee"/><rect x="962.41" y="350.98" width="2.70" height="13.72" fill="#a9d3ee"/><rect x="984.54" y="246.96" width="2.70" height="17.82" fill="#a9d3ee"/><rect x="984.54" y="305.23" width="2.70" height="17.82" fill="#a9d3ee"/><rect x="989.84" y="251.06" width="2.70" height="13.72" fill="#a9d3ee"/><rect x="989.84" y="309.33" width="2.70" height="13.72" fill="#a9d3ee"/><rect x="1025.67" y="280.19" width="2.70" height="26.24" fill="#a9d3ee"/><rect x="1030.97" y="276.09" width="2.70" height="34.44" fill="#a9d3ee"/><rect x="1053.10" y="221.92" width="2.70" height="26.23" fill="#a9d3ee"/><rect x="1053.10" y="338.46" width="2.70" height="26.23" fill="#a9d3ee"/><rect x="1058.40" y="217.82" width="2.70" height="34.44" fill="#a9d3ee"/><rect x="1058.40" y="334.36" width="2.70" height="34.44" fill="#a9d3ee"/><rect x="1066.81" y="350.98" width="2.70" height="17.82" fill="#a9d3ee"/><rect x="1072.11" y="350.98" width="2.70" height="13.72" fill="#a9d3ee"/><rect x="1094.23" y="246.96" width="2.70" height="17.82" fill="#a9d3ee"/><rect x="1094.23" y="305.23" width="2.70" height="59.47" fill="#a9d3ee"/><rect x="1099.53" y="251.06" width="2.70" height="13.72" fill="#a9d3ee"/><rect x="1099.53" y="309.33" width="2.70" height="59.47" fill="#a9d3ee"/><rect x="1135.37" y="350.98" width="2.70" height="17.82" fill="#a9d3ee"/><rect x="1140.67" y="350.98" width="2.70" height="13.72" fill="#a9d3ee"/><rect x="1149.08" y="221.92" width="2.70" height="13.72" fill="#a9d3ee"/><rect x="1149.08" y="276.09" width="2.70" height="17.82" fill="#a9d3ee"/><rect x="1154.38" y="217.82" width="2.70" height="17.82" fill="#a9d3ee"/><rect x="1154.38" y="280.19" width="2.70" height="13.72" fill="#a9d3ee"/><rect x="1162.79" y="251.06" width="2.70" height="26.23" fill="#a9d3ee"/><rect x="1162.79" y="309.33" width="2.70" height="55.37" fill="#a9d3ee"/><rect x="1168.09" y="246.96" width="2.70" height="34.44" fill="#a9d3ee"/><rect x="1168.09" y="305.23" width="2.70" height="63.57" fill="#a9d3ee"/><rect x="1176.50" y="292.71" width="2.70" height="17.82" fill="#a9d3ee"/><rect x="1176.50" y="350.98" width="2.70" height="17.82" fill="#a9d3ee"/><rect x="1181.80" y="292.71" width="2.70" height="13.72" fill="#a9d3ee"/><rect x="1181.80" y="350.98" width="2.70" height="13.72" fill="#a9d3ee"/><rect x="1203.93" y="246.96" width="2.70" height="17.82" fill="#a9d3ee"/><rect x="1209.23" y="251.06" width="2.70" height="13.72" fill="#a9d3ee"/><rect x="1272.49" y="221.92" width="2.70" height="26.23" fill="#a9d3ee"/><rect x="1272.49" y="280.19" width="2.70" height="84.51" fill="#a9d3ee"/><rect x="1277.79" y="217.82" width="2.70" height="34.44" fill="#a9d3ee"/><rect x="1277.79" y="276.09" width="2.70" height="92.71" fill="#a9d3ee"/><rect x="1286.20" y="234.44" width="2.70" height="17.82" fill="#a9d3ee"/><rect x="1291.50" y="234.44" width="2.70" height="13.72" fill="#a9d3ee"/><rect x="1299.91" y="263.57" width="2.70" height="17.82" fill="#a9d3ee"/><rect x="1305.21" y="263.57" width="2.70" height="13.72" fill="#a9d3ee"/><rect x="1313.62" y="221.92" width="2.70" height="13.72" fill="#a9d3ee"/><rect x="1313.62" y="292.71" width="2.70" height="17.82" fill="#a9d3ee"/><rect x="1318.92" y="217.82" width="2.70" height="17.82" fill="#a9d3ee"/><rect x="1318.92" y="292.71" width="2.70" height="13.72" fill="#a9d3ee"/><rect x="1327.34" y="251.06" width="2.70" height="13.72" fill="#a9d3ee"/><rect x="1327.34" y="350.98" width="2.70" height="17.82" fill="#a9d3ee"/><rect x="1332.64" y="246.96" width="2.70" height="17.82" fill="#a9d3ee"/><rect x="1332.64" y="350.98" width="2.70" height="13.72" fill="#a9d3ee"/><rect x="1354.76" y="305.23" width="2.70" height="59.47" fill="#a9d3ee"/><rect x="1360.06" y="309.33" width="2.70" height="59.47" fill="#a9d3ee"/><rect x="1368.47" y="276.09" width="2.70" height="30.34" fill="#a9d3ee"/><rect x="1373.77" y="280.19" width="2.70" height="30.34" fill="#a9d3ee"/><rect x="1382.18" y="246.96" width="2.70" height="30.33" fill="#a9d3ee"/><rect x="1387.48" y="251.06" width="2.70" height="30.33" fill="#a9d3ee"/><rect x="1395.90" y="221.92" width="2.70" height="26.23" fill="#a9d3ee"/><rect x="1401.20" y="217.82" width="2.70" height="34.44" fill="#a9d3ee"/><rect x="1409.61" y="350.98" width="2.70" height="17.82" fill="#a9d3ee"/><rect x="1414.91" y="350.98" width="2.70" height="13.72" fill="#a9d3ee"/><rect x="1437.03" y="276.09" width="2.70" height="88.61" fill="#a9d3ee"/><rect x="1442.33" y="280.19" width="2.70" height="88.61" fill="#a9d3ee"/><rect x="1450.74" y="221.92" width="2.70" height="13.72" fill="#a9d3ee"/><rect x="1450.74" y="292.71" width="2.70" height="17.82" fill="#a9d3ee"/><rect x="1456.04" y="217.82" width="2.70" height="17.82" fill="#a9d3ee"/><rect x="1456.04" y="292.71" width="2.70" height="13.72" fill="#a9d3ee"/><rect x="1464.46" y="251.06" width="2.70" height="13.72" fill="#a9d3ee"/><rect x="1464.46" y="321.85" width="2.70" height="17.82" fill="#a9d3ee"/><rect x="1469.76" y="246.96" width="2.70" height="17.82" fill="#a9d3ee"/><rect x="1469.76" y="321.85" width="2.70" height="13.72" fill="#a9d3ee"/><rect x="1478.17" y="280.19" width="2.70" height="13.72" fill="#a9d3ee"/><rect x="1478.17" y="350.98" width="2.70" height="17.82" fill="#a9d3ee"/><rect x="1483.47" y="276.09" width="2.70" height="17.82" fill="#a9d3ee"/><rect x="1483.47" y="350.98" width="2.70" height="13.72" fill="#a9d3ee"/><rect x="1491.88" y="309.33" width="2.70" height="13.72" fill="#a9d3ee"/><rect x="1497.18" y="305.23" width="2.70" height="17.82" fill="#a9d3ee"/><rect x="1533.02" y="221.92" width="2.70" height="142.77" fill="#a9d3ee"/><rect x="1538.32" y="217.82" width="2.70" height="150.98" fill="#a9d3ee"/><rect x="1546.73" y="321.85" width="2.70" height="17.82" fill="#a9d3ee"/><rect x="1552.03" y="321.85" width="2.70" height="13.72" fill="#a9d3ee"/><rect x="1560.44" y="350.98" width="2.70" height="17.82" fill="#a9d3ee"/><rect x="1565.74" y="350.98" width="2.70" height="13.72" fill="#a9d3ee"/><rect x="1574.15" y="246.96" width="2.70" height="76.09" fill="#a9d3ee"/><rect x="1579.45" y="251.06" width="2.70" height="71.99" fill="#a9d3ee"/><rect x="1642.71" y="221.92" width="2.70" height="26.23" fill="#a9d3ee"/><rect x="1642.71" y="338.46" width="2.70" height="26.23" fill="#a9d3ee"/><rect x="1648.01" y="217.82" width="2.70" height="34.44" fill="#a9d3ee"/><rect x="1648.01" y="334.36" width="2.70" height="34.44" fill="#a9d3ee"/><rect x="610.76" y="205.41" width="28.32" height="30.14" fill="#9bd5f6"/><rect x="679.32" y="205.41" width="28.32" height="30.14" fill="#9bd5f6"/><rect x="720.45" y="205.41" width="28.32" height="30.14" fill="#9bd5f6"/><rect x="802.72" y="205.41" width="28.32" height="30.14" fill="#9bd5f6"/><rect x="843.86" y="205.41" width="83.17" height="30.14" fill="#9bd5f6"/><rect x="953.56" y="205.41" width="96.88" height="30.14" fill="#9bd5f6"/><rect x="1063.25" y="205.41" width="83.17" height="30.14" fill="#9bd5f6"/><rect x="1172.95" y="205.41" width="96.88" height="30.14" fill="#9bd5f6"/><rect x="1282.64" y="205.41" width="28.32" height="30.14" fill="#9bd5f6"/><rect x="1364.92" y="205.41" width="28.32" height="30.14" fill="#9bd5f6"/><rect x="1406.05" y="205.41" width="42.04" height="30.14" fill="#9bd5f6"/><rect x="1502.04" y="205.41" width="28.32" height="30.14" fill="#9bd5f6"/><rect x="1556.88" y="205.41" width="83.17" height="30.14" fill="#9bd5f6"/><rect x="610.76" y="234.54" width="28.32" height="30.14" fill="#9bd5f6"/><rect x="679.32" y="234.54" width="28.32" height="30.14" fill="#9bd5f6"/><rect x="734.16" y="234.54" width="28.32" height="30.14" fill="#9bd5f6"/><rect x="789.01" y="234.54" width="28.32" height="30.14" fill="#9bd5f6"/><rect x="843.86" y="234.54" width="28.32" height="30.14" fill="#9bd5f6"/><rect x="912.42" y="234.54" width="28.32" height="30.14" fill="#9bd5f6"/><rect x="953.56" y="234.54" width="28.32" height="30.14" fill="#9bd5f6"/><rect x="1063.25" y="234.54" width="28.32" height="30.14" fill="#9bd5f6"/><rect x="1131.81" y="234.54" width="28.32" height="30.14" fill="#9bd5f6"/><rect x="1172.95" y="234.54" width="28.32" height="30.14" fill="#9bd5f6"/><rect x="1296.36" y="234.54" width="28.32" height="30.14" fill="#9bd5f6"/><rect x="1351.20" y="234.54" width="28.32" height="30.14" fill="#9bd5f6"/><rect x="1406.05" y="234.54" width="55.75" height="30.14" fill="#9bd5f6"/><rect x="1502.04" y="234.54" width="28.32" height="30.14" fill="#9bd5f6"/><rect x="1543.17" y="234.54" width="28.32" height="30.14" fill="#9bd5f6"/><rect x="610.76" y="263.68" width="96.88" height="30.14" fill="#9bd5f6"/><rect x="747.88" y="263.68" width="55.75" height="30.14" fill="#9bd5f6"/><rect x="843.86" y="263.68" width="83.17" height="30.14" fill="#9bd5f6"/><rect x="953.56" y="263.68" width="69.46" height="30.14" fill="#9bd5f6"/><rect x="1063.25" y="263.68" width="83.17" height="30.14" fill="#9bd5f6"/><rect x="1172.95" y="263.68" width="96.88" height="30.14" fill="#9bd5f6"/><rect x="1310.07" y="263.68" width="55.75" height="30.14" fill="#9bd5f6"/><rect x="1406.05" y="263.68" width="28.32" height="30.14" fill="#9bd5f6"/><rect x="1447.19" y="263.68" width="28.32" height="30.14" fill="#9bd5f6"/><rect x="1502.04" y="263.68" width="28.32" height="30.14" fill="#9bd5f6"/><rect x="1543.17" y="263.68" width="28.32" height="30.14" fill="#9bd5f6"/><rect x="610.76" y="292.81" width="28.32" height="30.14" fill="#9bd5f6"/><rect x="679.32" y="292.81" width="28.32" height="30.14" fill="#9bd5f6"/><rect x="761.59" y="292.81" width="28.32" height="30.14" fill="#9bd5f6"/><rect x="843.86" y="292.81" width="28.32" height="30.14" fill="#9bd5f6"/><rect x="953.56" y="292.81" width="28.32" height="30.14" fill="#9bd5f6"/><rect x="1063.25" y="292.81" width="28.32" height="30.14" fill="#9bd5f6"/><rect x="1131.81" y="292.81" width="28.32" height="30.14" fill="#9bd5f6"/><rect x="1241.51" y="292.81" width="28.32" height="30.14" fill="#9bd5f6"/><rect x="1323.78" y="292.81" width="28.32" height="30.14" fill="#9bd5f6"/><rect x="1406.05" y="292.81" width="28.32" height="30.14" fill="#9bd5f6"/><rect x="1460.90" y="292.81" width="28.32" height="30.14" fill="#9bd5f6"/><rect x="1502.04" y="292.81" width="28.32" height="30.14" fill="#9bd5f6"/><rect x="1543.17" y="292.81" width="28.32" height="30.14" fill="#9bd5f6"/><rect x="610.76" y="321.95" width="28.32" height="30.14" fill="#9bd5f6"/><rect x="679.32" y="321.95" width="28.32" height="30.14" fill="#9bd5f6"/><rect x="761.59" y="321.95" width="28.32" height="30.14" fill="#9bd5f6"/><rect x="843.86" y="321.95" width="28.32" height="30.14" fill="#9bd5f6"/><rect x="953.56" y="321.95" width="96.88" height="30.14" fill="#9bd5f6"/><rect x="1063.25" y="321.95" width="28.32" height="30.14" fill="#9bd5f6"/><rect x="1131.81" y="321.95" width="28.32" height="30.14" fill="#9bd5f6"/><rect x="1172.95" y="321.95" width="96.88" height="30.14" fill="#9bd5f6"/><rect x="1323.78" y="321.95" width="28.32" height="30.14" fill="#9bd5f6"/><rect x="1406.05" y="321.95" width="28.32" height="30.14" fill="#9bd5f6"/><rect x="1474.61" y="321.95" width="55.75" height="30.14" fill="#9bd5f6"/><rect x="1556.88" y="321.95" width="83.17" height="30.14" fill="#9bd5f6"/><rect x="343.67" y="968.42" width="3.00" height="25.30" fill="#cbe59d"/><rect x="617.91" y="968.42" width="3.00" height="25.30" fill="#cbe59d"/><rect x="343.67" y="997.55" width="3.00" height="25.30" fill="#cbe59d"/><rect x="617.91" y="997.55" width="3.00" height="25.30" fill="#cbe59d"/><rect x="343.67" y="1026.68" width="3.00" height="25.30" fill="#cbe59d"/><rect x="617.91" y="1026.68" width="3.00" height="25.30" fill="#cbe59d"/><rect x="343.67" y="1055.82" width="3.00" height="25.30" fill="#cbe59d"/><rect x="617.91" y="1055.82" width="3.00" height="25.30" fill="#cbe59d"/><rect x="343.67" y="1084.95" width="3.00" height="25.30" fill="#cbe59d"/><rect x="617.91" y="1084.95" width="3.00" height="25.30" fill="#cbe59d"/><rect x="343.67" y="1114.09" width="3.00" height="25.30" fill="#cbe59d"/><rect x="617.91" y="1114.09" width="3.00" height="25.30" fill="#cbe59d"/><rect x="343.67" y="1143.22" width="3.00" height="25.30" fill="#cbe59d"/><rect x="617.91" y="1143.22" width="3.00" height="25.30" fill="#cbe59d"/><rect x="343.67" y="1172.36" width="3.00" height="25.30" fill="#cbe59d"/><rect x="617.91" y="1172.36" width="3.00" height="25.30" fill="#cbe59d"/><rect x="343.67" y="1201.50" width="3.00" height="25.30" fill="#cbe59d"/><rect x="617.91" y="1201.50" width="3.00" height="25.30" fill="#cbe59d"/><rect x="343.67" y="1230.63" width="3.00" height="25.30" fill="#cbe59d"/><rect x="617.91" y="1230.63" width="3.00" height="25.30" fill="#cbe59d"/><rect x="343.67" y="1259.77" width="3.00" height="25.30" fill="#cbe59d"/><rect x="617.91" y="1259.77" width="3.00" height="25.30" fill="#cbe59d"/><rect x="343.67" y="1288.90" width="3.00" height="25.30" fill="#cbe59d"/><rect x="617.91" y="1288.90" width="3.00" height="25.30" fill="#cbe59d"/><rect x="343.67" y="1318.04" width="3.00" height="25.30" fill="#cbe59d"/><rect x="617.91" y="1318.04" width="3.00" height="25.30" fill="#cbe59d"/><rect x="343.67" y="1347.17" width="3.00" height="25.30" fill="#cbe59d"/><rect x="617.91" y="1347.17" width="3.00" height="25.30" fill="#cbe59d"/></svg>
<div class="t" style="left:611.16px;top:529.16px;-webkit-text-stroke:3.4px #000"><span style="color:#f6cd87">Streaming Uniswap V3 Events from Ethereum Mainnet — Block Height: 22,040,197</span></div>
<div class="t" style="left:611.16px;top:529.16px;-webkit-text-stroke:0.7px #f6cd87;paint-order:normal"><span style="color:#f6cd87">Streaming Uniswap V3 Events from Ethereum Mainnet — Block Height: 22,040,197</span></div>
<div class="t" style="left:131.24px;top:587.43px"><span style="color:#d2d2d6">Scanning Progress</span></div>
<div class="t" style="left:103.81px;top:645.70px"><span style="color:#f4f4f4">81.70% Block: 18,005,920/22,040,197</span></div>
<div class="t" style="left:117.52px;top:703.97px"><span style="color:#d2d2d6">Stats</span></div>
<div class="t" style="left:1159.64px;top:703.97px"><span style="color:#d2d2d6">Event Distribution</span></div>
<div class="t" style="left:103.81px;top:733.10px"><span style="color:#a6d6f5">Current Block</span><span style="color:#f4f4f4">: 18,005,920</span></div>
<div class="t" style="left:103.81px;top:762.24px"><span style="color:#a6d6f5">Progress</span><span style="color:#f4f4f4">: 81.70%</span></div>
<div class="t" style="left:103.81px;top:791.37px"><span style="color:#a6d6f5">Total Events</span><span style="color:#f4f4f4">: 37,624,358</span></div>
<div class="t" style="left:103.81px;top:820.51px"><span style="color:#a6d6f5">Elapsed Time</span><span style="color:#f4f4f4">: 76.9s</span></div>
<div class="t" style="left:103.81px;top:849.64px"><span style="color:#a6d6f5">Speed</span><span style="color:#f4f4f4">: 489,243.1 events/s</span></div>
<div class="t" style="left:1145.92px;top:733.10px"><span style="color:#a6d6f5">PoolCreated:</span></div>
<div class="t" style="left:1557.28px;top:733.10px"><span style="color:#f4f4f4">15,589 (0.0%)</span></div>
<div class="t" style="left:1145.92px;top:762.24px"><span style="color:#a6d6f5">Initialize:</span></div>
<div class="t" style="left:1557.28px;top:762.24px"><span style="color:#f4f4f4">15,545 (0.0%)</span></div>
<div class="t" style="left:1145.92px;top:791.37px"><span style="color:#a6d6f5">Mint:</span></div>
<div class="t" style="left:1653.27px;top:791.37px"><span style="color:#f4f4f4">842,346 (2.2%)</span></div>
<div class="t" style="left:1145.92px;top:820.51px"><span style="color:#a6d6f5">Burn:</span></div>
<div class="t" style="left:1653.27px;top:820.51px"><span style="color:#f4f4f4">932,269 (2.5%)</span></div>
<div class="t" style="left:1145.92px;top:849.64px"><span style="color:#a6d6f5">Swap:</span></div>
<div class="t" style="left:1749.25px;top:849.64px"><span style="color:#f4f4f4">35,780,677 (95.2%)</span></div>
<div class="t" style="left:117.52px;top:937.05px"><span style="color:#d2d2d6">Event Log</span></div>
<div class="t" style="left:103.81px;top:966.18px"><span style="color:#a6d6f5">Block</span><span style="color:#cbe59d"> 17,317,720   33,028,889 events   481031.5 events/s</span></div>
<div class="t" style="left:103.81px;top:995.32px"><span style="color:#a6d6f5">Block</span><span style="color:#cbe59d"> 17,367,810   33,624,403 events   483936.3 events/s</span></div>
<div class="t" style="left:103.81px;top:1024.45px"><span style="color:#a6d6f5">Block</span><span style="color:#cbe59d"> 17,417,960   34,009,266 events   486178.1 events/s</span></div>
<div class="t" style="left:103.81px;top:1053.59px"><span style="color:#a6d6f5">Block</span><span style="color:#cbe59d"> 17,468,120   34,367,530 events   486435.7 events/s</span></div>
<div class="t" style="left:103.81px;top:1082.72px"><span style="color:#a6d6f5">Block</span><span style="color:#cbe59d"> 17,518,380   34,659,616 events   487715.0 events/s</span></div>
<div class="t" style="left:103.81px;top:1111.86px"><span style="color:#a6d6f5">Block</span><span style="color:#cbe59d"> 17,568,590   35,000,430 events   488607.1 events/s</span></div>
<div class="t" style="left:103.81px;top:1140.99px"><span style="color:#a6d6f5">Block</span><span style="color:#cbe59d"> 17,618,670   35,313,145 events   489355.5 events/s</span></div>
<div class="t" style="left:103.81px;top:1170.13px"><span style="color:#a6d6f5">Block</span><span style="color:#cbe59d"> 17,669,150   35,580,735 events   488472.7 events/s</span></div>
<div class="t" style="left:103.81px;top:1199.26px"><span style="color:#a6d6f5">Block</span><span style="color:#cbe59d"> 17,719,470   35,898,530 events   489517.3 events/s</span></div>
<div class="t" style="left:103.81px;top:1228.40px"><span style="color:#a6d6f5">Block</span><span style="color:#cbe59d"> 17,769,960   36,194,524 events   490582.8 events/s</span></div>
<div class="t" style="left:103.81px;top:1257.53px"><span style="color:#a6d6f5">Block</span><span style="color:#cbe59d"> 17,820,540   36,492,093 events   487882.9 events/s</span></div>
<div class="t" style="left:103.81px;top:1286.67px"><span style="color:#a6d6f5">Block</span><span style="color:#cbe59d"> 17,871,250   36,787,946 events   488885.4 events/s</span></div>
<div class="t" style="left:103.81px;top:1315.80px"><span style="color:#a6d6f5">Block</span><span style="color:#cbe59d"> 17,921,860   37,090,816 events   488537.8 events/s</span></div>
<div class="t" style="left:103.81px;top:1344.94px"><span style="color:#a6d6f5">Block</span><span style="color:#cbe59d"> 17,972,280   37,422,847 events   489169.5 events/s</span></div>
</body></html>
